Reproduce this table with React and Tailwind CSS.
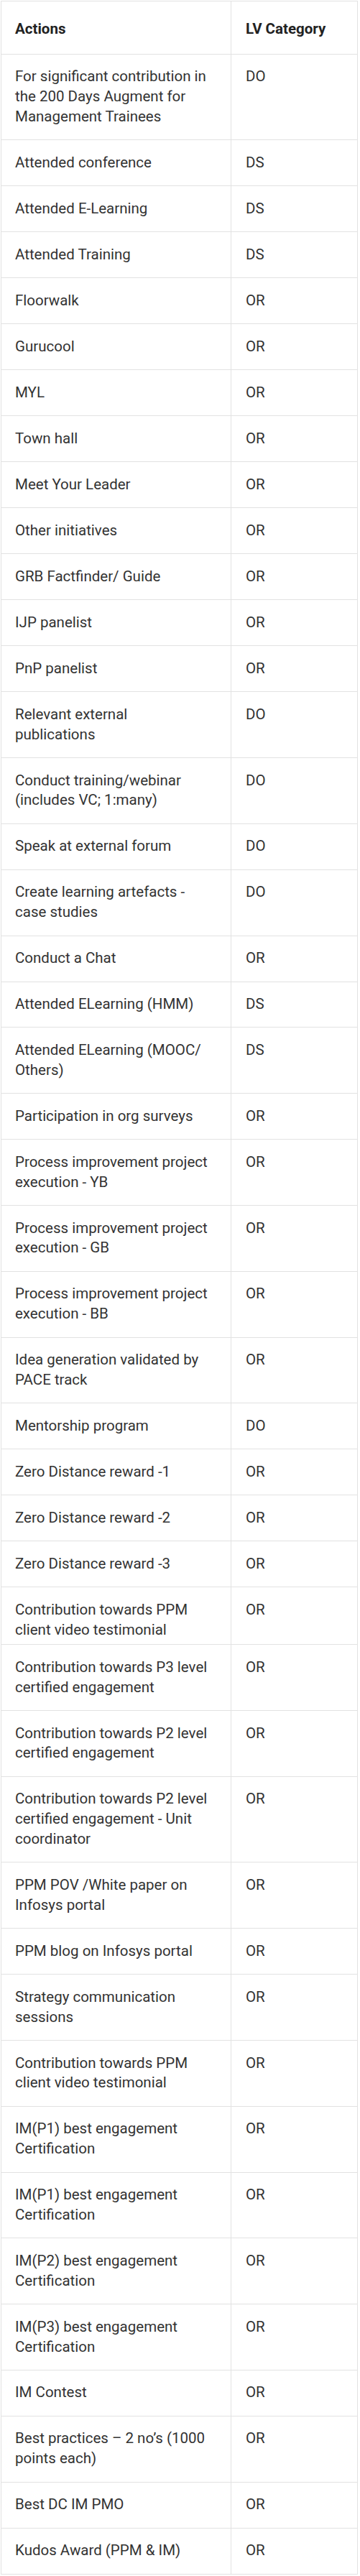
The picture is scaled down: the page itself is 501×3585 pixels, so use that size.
import React from 'react'

// action / category rows, line breaks kept as in the source sheet
const rows = [
  ['For significant contribution in\nthe 200 Days Augment for\nManagement Trainees', 'DO'],
  ['Attended conference', 'DS'],
  ['Attended E-Learning', 'DS'],
  ['Attended Training', 'DS'],
  ['Floorwalk', 'OR'],
  ['Gurucool', 'OR'],
  ['MYL', 'OR'],
  ['Town hall', 'OR'],
  ['Meet Your Leader', 'OR'],
  ['Other initiatives', 'OR'],
  ['GRB Factfinder/ Guide', 'OR'],
  ['IJP panelist', 'OR'],
  ['PnP panelist', 'OR'],
  ['Relevant external\npublications', 'DO'],
  ['Conduct training/webinar\n(includes VC; 1:many)', 'DO'],
  ['Speak at external forum', 'DO'],
  ['Create learning artefacts -\ncase studies', 'DO'],
  ['Conduct a Chat', 'OR'],
  ['Attended ELearning (HMM)', 'DS'],
  ['Attended ELearning (MOOC/\nOthers)', 'DS'],
  ['Participation in org surveys', 'OR'],
  ['Process improvement project\nexecution - YB', 'OR'],
  ['Process improvement project\nexecution - GB', 'OR'],
  ['Process improvement project\nexecution - BB', 'OR'],
  ['Idea generation validated by\nPACE track', 'OR'],
  ['Mentorship program', 'DO'],
  ['Zero Distance reward -1', 'OR'],
  ['Zero Distance reward -2', 'OR'],
  ['Zero Distance reward -3', 'OR'],
  ['Contribution towards PPM\nclient video testimonial', 'OR', true],
  ['Contribution towards P3 level\ncertified engagement', 'OR'],
  ['Contribution towards P2 level\ncertified engagement', 'OR'],
  ['Contribution towards P2 level\ncertified engagement - Unit\ncoordinator', 'OR'],
  ['PPM POV /White paper on\nInfosys portal', 'OR'],
  ['PPM blog on Infosys portal', 'OR'],
  ['Strategy communication\nsessions', 'OR'],
  ['Contribution towards PPM\nclient video testimonial', 'OR'],
  ['IM(P1) best engagement\nCertification', 'OR'],
  ['IM(P1) best engagement\nCertification', 'OR'],
  ['IM(P2) best engagement\nCertification', 'OR'],
  ['IM(P3) best engagement\nCertification', 'OR'],
  ['IM Contest', 'OR'],
  ['Best practices – 2 no’s (1000\npoints each)', 'OR'],
  ['Best DC IM PMO', 'OR'],
  ['Kudos Award (PPM & IM)', 'OR'],
]

const App = () => {
  return (
    <div className="w-[501px] bg-white font-['Roboto',sans-serif] text-[20.5px] leading-[27.8px] text-[#333]">
      <table className="mt-px ml-px w-[497px] table-fixed border-collapse border border-[#e2e2e2]">
        <thead>
          <tr>
            <th className="w-[320px] border border-[#e2e2e2] pt-[25px] pb-[20px] pl-[19px] pr-3 text-left font-bold text-[#222]">
              Actions
            </th>
            <th className="border border-[#e2e2e2] pt-[25px] pb-[20px] pl-5 pr-3 text-left font-bold text-[#222]">
              LV Category
            </th>
          </tr>
        </thead>
        <tbody>
          {rows.map(([action, cat, short], i) => (
            <tr key={i}>
              <td
                className={`border border-[#e2e2e2] pl-[19px] pr-3 pt-[17.6px] align-top whitespace-pre-line ${
                  short ? 'pb-[5.8px]' : 'pb-[17.6px]'
                }`}
              >
                {action}
              </td>
              <td className="border border-[#e2e2e2] pl-5 pr-3 py-[17.6px] align-top">{cat}</td>
            </tr>
          ))}
        </tbody>
      </table>
    </div>
  )
}

export default App
